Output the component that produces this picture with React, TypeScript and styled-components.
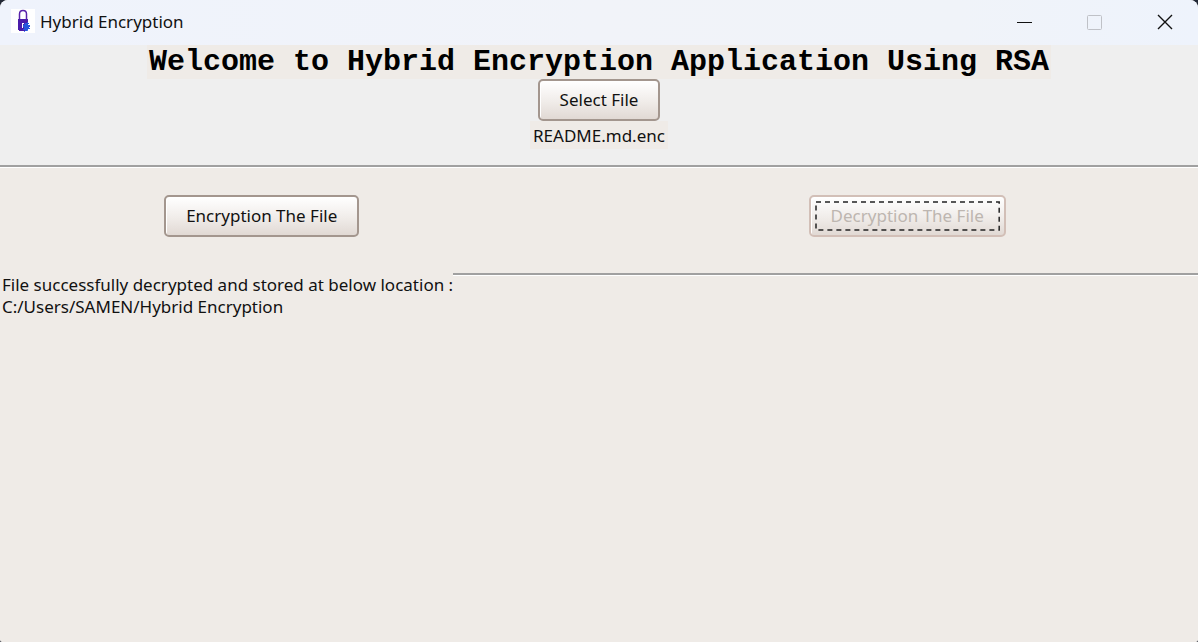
import React from 'react';
import styled, { createGlobalStyle } from 'styled-components';

const GlobalStyle = createGlobalStyle`
  *, *::before, *::after { box-sizing: border-box; }
  body { margin: 0; background: #222836; }
  button { font: inherit; }
`;

const face = '#efebe7';

const Window = styled.div`
  display: flex;
  flex-direction: column;
  min-height: 100vh;
  overflow: hidden;
  border-radius: 8px 8px 2px 2px;
  background: ${face};
  color: #111;
  font-family: 'Noto Sans', 'Open Sans', sans-serif;
  font-size: 17px;
  line-height: 22px;
`;

const TitleBar = styled.header`
  display: flex;
  align-items: center;
  height: 45px;
  padding-left: 11px;
  background: linear-gradient(90deg, #eff3fc, #f1f3f9 50%, #f0f3f9 80%, #eef3fc);
`;

const AppIcon = styled.svg`
  flex: none;
  width: 24px;
  height: 24px;
  margin-top: -3px;
`;

const Caption = styled.span`
  flex: 1;
  margin: -2px 0 0 5px;
`;

const CaptionButton = styled.button`
  display: flex;
  align-items: center;
  justify-content: center;
  width: 70px;
  height: 45px;
  padding: 0 0 2px 4px;
  border: 0;
  background: transparent;
  color: #111;

  &:disabled { color: #bfc1c7; }
`;

const Header = styled.section`
  display: flex;
  flex-direction: column;
  align-items: center;
  height: 120px;
  background: #efefef;
`;

const Heading = styled.h1`
  margin: 0;
  padding: 0 2px;
  background: ${face};
  color: #000;
  font: bold 30px/34px 'Liberation Mono', monospace;
  white-space: nowrap;
`;

const FileName = styled.output`
  padding: 4px 3px 2px;
  background: ${face};
`;

const PushButton = styled.button`
  position: relative;
  height: 42px;
  padding: 0 20px 1px;
  border: 2px solid #a3968e;
  border-radius: 5px;
  background: linear-gradient(#fff, #f0ece9 55%, #e1d9d4);
  box-shadow: inset 1px 1px 0 #fff;
  color: #111;
  white-space: nowrap;

  &:disabled {
    border-color: #d2bfb7;
    color: #bdb6b0;
  }
`;

const FocusRing = styled.svg`
  position: absolute;
  inset: 4px;
  width: calc(100% - 8px);
  height: calc(100% - 8px);

  rect {
    width: calc(100% - 2px);
    height: calc(100% - 2px);
  }
`;

const Rule = styled.hr`
  flex: 1;
  height: 3px;
  margin: 0;
  border: solid;
  border-width: 2px 0 1px;
  border-color: #a0a0a0 transparent #fff;
`;

const RuleRow = styled.div`
  display: flex;
`;

const Actions = styled.section`
  display: grid;
  grid-template-columns: 9fr 10fr;
  column-gap: 93px;
  justify-items: center;
  padding: 27px 0 36px;
`;

const Result = styled.div`
  display: flex;
  align-items: flex-start;
`;

const Message = styled.p`
  margin: 0;
  padding: 1px 0 0 2px;
  white-space: pre-line;
`;

export default function App() {
  return (
    <>
      <GlobalStyle />
      <Window>
        <TitleBar>
          <AppIcon viewBox="0 0 24 24" aria-hidden="true">
            <rect width="24" height="24" fill="#fff" />
            <path d="M8.5 11V5q0-3.5 3.5-3.5T15.500 5v6" fill="none" stroke="#5923aa" strokeWidth="1.5" />
            <path d="M7 10h10v11h-1v1H8v-1H7z" fill="#4b1caa" />
            <path d="M14 14h2v-1h1v1h1v1h-1v1h2v2h-1v1h1v1h-2v1h-1v1h-2v-1h-2v-1h1v-2h-1v-2h1z" fill="#2856dc" />
            <path d="M11 14h2v1h-1v4h-1z" fill="#fff" />
            <path d="M13 22h1v1h-1zM16 21h1v1h-1z" fill="#4c7ff0" />
          </AppIcon>
          <Caption>Hybrid Encryption</Caption>
          <CaptionButton type="button" aria-label="Minimize">
            <svg width="16" height="16"><path d="M0 8.5h15" stroke="currentColor" /></svg>
          </CaptionButton>
          <CaptionButton type="button" aria-label="Maximize" disabled>
            <svg width="16" height="16"><rect x="0.5" y="1.5" width="14" height="14" rx="1" fill="none" stroke="currentColor" /></svg>
          </CaptionButton>
          <CaptionButton type="button" aria-label="Close">
            <svg width="16" height="16"><path d="M1 1l14 14M15 1L1 15" stroke="currentColor" strokeWidth="1.4" /></svg>
          </CaptionButton>
        </TitleBar>
        <Header>
          <Heading>Welcome to Hybrid Encryption Application Using RSA</Heading>
          <PushButton type="button">Select File</PushButton>
          <FileName>README.md.enc</FileName>
        </Header>
        <RuleRow><Rule /></RuleRow>
        <Actions>
          <PushButton type="button">Encryption The File</PushButton>
          <PushButton type="button" disabled>
            Decryption The File
            <FocusRing aria-hidden="true">
              <rect x="1" y="1" fill="none" stroke="#222" strokeWidth="1.5" strokeDasharray="5 4" />
            </FocusRing>
          </PushButton>
        </Actions>
        <Result>
          <Message>{'File successfully decrypted and stored at below location :\nC:/Users/SAMEN/Hybrid Encryption'}</Message>
          <Rule />
        </Result>
      </Window>
    </>
  );
}
